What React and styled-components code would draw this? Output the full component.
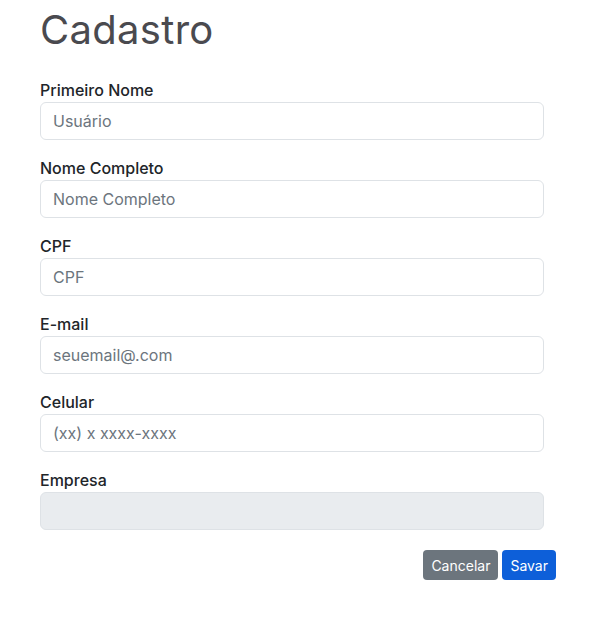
import React from "react";
import styled, { createGlobalStyle } from "styled-components";

const Global = createGlobalStyle`
  * { box-sizing: border-box; }
  body {
    margin: 0;
    background: #fff;
    font-family: Inter, "Noto Sans", sans-serif;
    color: #212529;
  }
`;

const Page = styled.div`
  width: 591px;
  padding: 6px 35px 0 40px;
`;

const Title = styled.h1`
  margin: 0 0 24px;
  font-size: 40px;
  line-height: 48px;
  font-weight: 400;
  color: #4a4a4f;
  letter-spacing: 0.3px;
`;

const Form = styled.form`
  display: flex;
  flex-direction: column;
`;

const Field = styled.div`
  width: 504px;
  margin-bottom: 16px;
  display: flex;
  flex-direction: column;
`;

const Label = styled.label`
  font-size: 16px;
  line-height: 24px;
  font-weight: 500;
  color: #212529;
`;

const Input = styled.input`
  height: 38px;
  width: 100%;
  padding: 6px 12px;
  font-family: inherit;
  font-size: 16px;
  color: #212529;
  background: ${(p) => (p.disabled ? "#e9ecef" : "#fff")};
  border: 1px solid #dee2e6;
  border-radius: 6px;
  outline: none;
  &::placeholder { color: #6c757d; }
`;

const Actions = styled.div`
  display: flex;
  justify-content: flex-end;
  gap: 4px;
  margin-top: 4px;
`;

const Button = styled.button`
  height: 30px;
  padding: 4px 8px;
  font-family: inherit;
  font-size: 14px;
  border: none;
  border-radius: 4px;
  color: #fff;
  background: ${(p) => (p.$variant === "primary" ? "#0d5fd9" : "#6c757d")};
`;

const fields = [
  { label: "Primeiro Nome", placeholder: "Usuário" },
  { label: "Nome Completo", placeholder: "Nome Completo" },
  { label: "CPF", placeholder: "CPF" },
  { label: "E-mail", placeholder: "seuemail@.com" },
  { label: "Celular", placeholder: "(xx) x xxxx-xxxx" },
  { label: "Empresa", placeholder: "", disabled: true },
];

export default function App() {
  return (
    <>
      <Global />
      <Page>
        <Title>Cadastro</Title>
        <Form onSubmit={(e) => e.preventDefault()}>
          {fields.map((f) => (
            <Field key={f.label}>
              <Label>{f.label}</Label>
              <Input placeholder={f.placeholder} disabled={f.disabled} />
            </Field>
          ))}
          <Actions>
            <Button type="button">Cancelar</Button>
            <Button type="submit" $variant="primary">Savar</Button>
          </Actions>
        </Form>
      </Page>
    </>
  );
}
